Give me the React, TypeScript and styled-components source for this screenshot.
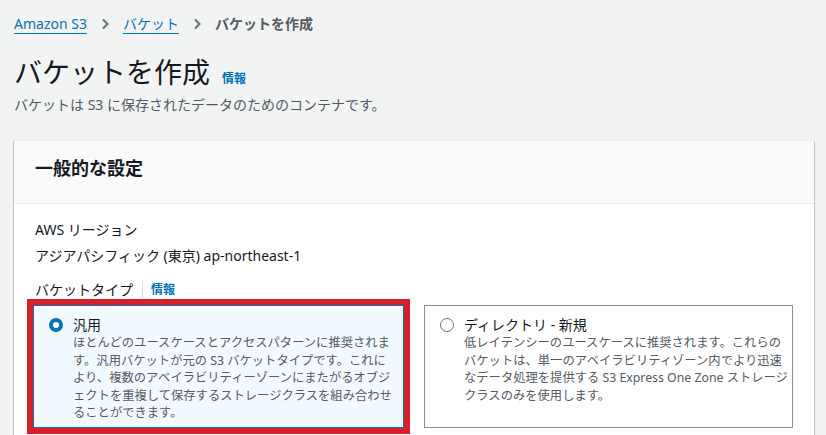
import React from "react";
import styled, { createGlobalStyle } from "styled-components";

const GlobalStyle = createGlobalStyle`
  html, body {
    margin: 0;
    padding: 0;
    background: #f2f3f3;
    font-family: "Noto Sans", "Noto Sans CJK JP", sans-serif;
    color: #16191f;
    overflow: hidden;
  }
  * { box-sizing: border-box; }
`;

const Page = styled.div`
  width: 826px;
  height: 435px;
  padding: 13px 12px 0 14px;
  overflow: hidden;
`;

const Breadcrumbs = styled.nav`
  display: flex;
  align-items: center;
  gap: 12px;
  height: 22px;
  font-size: 14px;
  line-height: 22px;
`;

const Crumb = styled.a`
  color: #0073bb;
  text-decoration: underline;
  text-underline-offset: 4px;
  text-decoration-thickness: 1px;
  cursor: pointer;
`;

const CrumbCurrent = styled.span`
  color: #545b64;
  font-weight: 700;
`;

const Chevron = styled.svg`
  width: 12px;
  height: 12px;
  flex: none;
`;

const TitleRow = styled.div`
  display: flex;
  align-items: baseline;
  gap: 12px;
  margin-top: 19px;
`;

const Title = styled.h1`
  margin: 0;
  font-size: 28px;
  font-weight: 400;
  line-height: 36px;
  color: #16191f;
`;

const InfoLink = styled.a`
  color: #0073bb;
  font-size: 12px;
  font-weight: 700;
  cursor: pointer;
`;

const Subtitle = styled.p`
  margin: 5px 0 0;
  font-size: 14px;
  line-height: 20px;
  color: #545b64;
`;

const Card = styled.section`
  margin-top: 25px;
  width: 800px;
  background: #fff;
  box-shadow: 0 1px 1px 0 rgba(0, 28, 36, 0.3), 1px 1px 1px 0 rgba(0, 28, 36, 0.15),
    -1px 1px 1px 0 rgba(0, 28, 36, 0.15);
  border-top: 1px solid #eaeded;
`;

const CardHeader = styled.header`
  height: 63px;
  padding: 15px 21px 0;
  background: #fafafa;
  border-bottom: 1px solid #eaeded;
`;

const CardTitle = styled.h2`
  margin: 0;
  font-size: 18px;
  font-weight: 700;
  line-height: 24px;
  color: #16191f;
`;

const CardBody = styled.div`
  padding: 15px 20px 20px 21px;
`;

const FieldLabel = styled.div`
  display: flex;
  align-items: center;
  font-size: 14px;
  line-height: 22px;
  color: #16191f;
`;

const FieldValue = styled.div`
  margin-top: 4px;
  font-size: 14px;
  line-height: 22px;
  color: #16191f;
`;

const Field = styled.div<{ $gap?: number }>`
  margin-top: ${(p) => p.$gap ?? 0}px;
`;

const Divider = styled.span`
  width: 1px;
  height: 16px;
  background: #d5dbdb;
  margin: 0 8px 0 9px;
`;

const Tiles = styled.div`
  display: grid;
  grid-template-columns: 371px 369px;
  gap: 20px;
  margin-top: 4px;
  margin-left: -2px;
`;

const Tile = styled.label<{ $selected?: boolean; $highlighted?: boolean }>`
  display: flex;
  gap: 10px;
  height: 123px;
  padding: 10px 14px 10px 15px;
  border: 1px solid ${(p) => (p.$selected ? "#0073bb" : "#879596")};
  border-radius: 0;
  background: ${(p) => (p.$selected ? "#f1faff" : "#fff")};
  outline: ${(p) => (p.$highlighted ? "6px solid #d91f2a" : "none")};
  outline-offset: 0;
`;

const Radio = styled.span<{ $checked?: boolean }>`
  flex: none;
  width: 14px;
  height: 14px;
  margin-top: 2px;
  border-radius: 50%;
  background: #fff;
  border: ${(p) => (p.$checked ? "4px solid #0073bb" : "1.5px solid #687078")};
`;

const TileText = styled.div`
  display: flex;
  flex-direction: column;
`;

const TileTitle = styled.div`
  font-size: 14px;
  line-height: 18px;
  color: #16191f;
`;

const TileDesc = styled.div`
  font-size: 12.3px;
  line-height: 17.6px;
  color: #545b64;
  white-space: nowrap;
`;

const ChevronIcon = () => (
  <Chevron viewBox="0 0 12 12">
    <path d="M4 1.5 L8.5 6 L4 10.5" fill="none" stroke="#687078" strokeWidth="2" />
  </Chevron>
);

const lines = (arr: string[]) =>
  arr.map((l, i) => (
    <React.Fragment key={i}>
      {l}
      {i < arr.length - 1 && <br />}
    </React.Fragment>
  ));

export default function App() {
  return (
    <>
      <GlobalStyle />
      <Page>
        <Breadcrumbs>
          <Crumb>Amazon S3</Crumb>
          <ChevronIcon />
          <Crumb>バケット</Crumb>
          <ChevronIcon />
          <CrumbCurrent>バケットを作成</CrumbCurrent>
        </Breadcrumbs>
        <TitleRow>
          <Title>バケットを作成</Title>
          <InfoLink>情報</InfoLink>
        </TitleRow>
        <Subtitle>バケットは S3 に保存されたデータのためのコンテナです。</Subtitle>
        <Card>
          <CardHeader>
            <CardTitle>一般的な設定</CardTitle>
          </CardHeader>
          <CardBody>
            <Field>
              <FieldLabel>AWS リージョン</FieldLabel>
              <FieldValue>アジアパシフィック (東京) ap-northeast-1</FieldValue>
            </Field>
            <Field $gap={12}>
              <FieldLabel>
                バケットタイプ
                <Divider />
                <InfoLink>情報</InfoLink>
              </FieldLabel>
              <Tiles>
                <Tile $selected $highlighted>
                  <Radio $checked />
                  <TileText>
                    <TileTitle>汎用</TileTitle>
                    <TileDesc>
                      {lines([
                        "ほとんどのユースケースとアクセスパターンに推奨されま",
                        "す。汎用バケットが元の S3 バケットタイプです。これに",
                        "より、複数のアベイラビリティーゾーンにまたがるオブジ",
                        "ェクトを重複して保存するストレージクラスを組み合わせ",
                        "ることができます。",
                      ])}
                    </TileDesc>
                  </TileText>
                </Tile>
                <Tile>
                  <Radio />
                  <TileText>
                    <TileTitle>ディレクトリ - 新規</TileTitle>
                    <TileDesc>
                      {lines([
                        "低レイテンシーのユースケースに推奨されます。これらの",
                        "バケットは、単一のアベイラビリティゾーン内でより迅速",
                        "なデータ処理を提供する S3 Express One Zone ストレージ",
                        "クラスのみを使用します。",
                      ])}
                    </TileDesc>
                  </TileText>
                </Tile>
              </Tiles>
            </Field>
          </CardBody>
        </Card>
      </Page>
    </>
  );
}
